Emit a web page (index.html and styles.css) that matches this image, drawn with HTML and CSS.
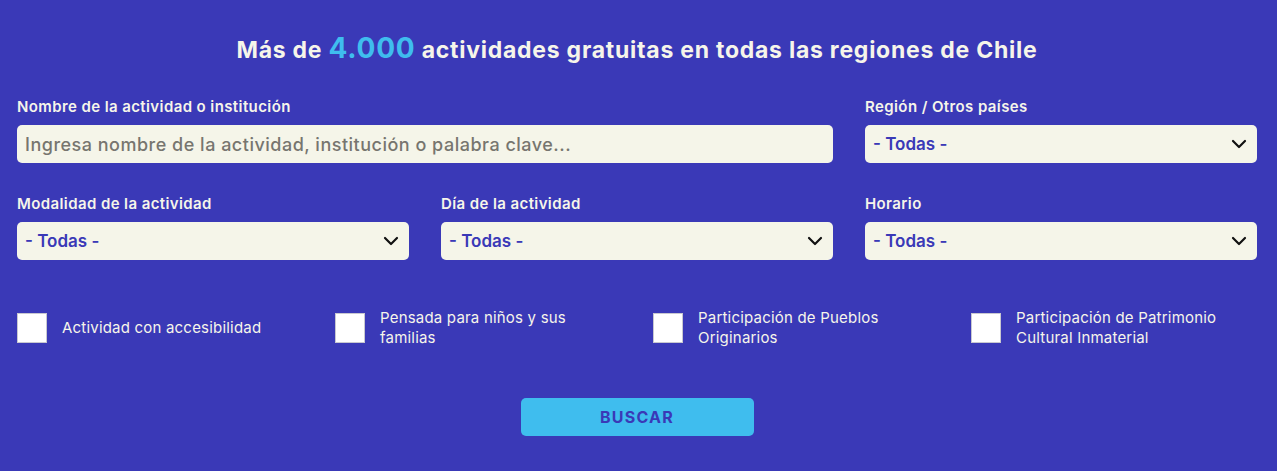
FILE: index.html
```html
<!DOCTYPE html>
<html lang="es">
<head>
<meta charset="utf-8">
<link rel="stylesheet" href="styles.css">
</head>
<body>
<div class="page">
  <h1 class="title">Más de <span class="num">4.000</span> actividades gratuitas en todas las regiones de Chile</h1>
  <div class="grid">
    <div class="field span2">
      <label class="lbl">Nombre de la actividad o institución</label>
      <div class="input placeholder">Ingresa nombre de la actividad, institución o palabra clave...</div>
    </div>
    <div class="field">
      <label class="lbl">Región / Otros países</label>
      <div class="input select"><span>- Todas -</span><svg class="chev" viewBox="0 0 16 10" width="16" height="10"><path d="M2 2l6 6 6-6" fill="none" stroke="#111" stroke-width="2.2" stroke-linecap="round" stroke-linejoin="round"/></svg></div>
    </div>
    <div class="field">
      <label class="lbl">Modalidad de la actividad</label>
      <div class="input select"><span>- Todas -</span><svg class="chev" viewBox="0 0 16 10" width="16" height="10"><path d="M2 2l6 6 6-6" fill="none" stroke="#111" stroke-width="2.2" stroke-linecap="round" stroke-linejoin="round"/></svg></div>
    </div>
    <div class="field">
      <label class="lbl">Día de la actividad</label>
      <div class="input select"><span>- Todas -</span><svg class="chev" viewBox="0 0 16 10" width="16" height="10"><path d="M2 2l6 6 6-6" fill="none" stroke="#111" stroke-width="2.2" stroke-linecap="round" stroke-linejoin="round"/></svg></div>
    </div>
    <div class="field">
      <label class="lbl">Horario</label>
      <div class="input select"><span>- Todas -</span><svg class="chev" viewBox="0 0 16 10" width="16" height="10"><path d="M2 2l6 6 6-6" fill="none" stroke="#111" stroke-width="2.2" stroke-linecap="round" stroke-linejoin="round"/></svg></div>
    </div>
  </div>
  <div class="checks">
    <div class="check"><span class="box"></span><span class="ctext">Actividad con accesibilidad</span></div>
    <div class="check"><span class="box"></span><span class="ctext">Pensada para niños y sus<br>familias</span></div>
    <div class="check"><span class="box"></span><span class="ctext">Participación de Pueblos<br>Originarios</span></div>
    <div class="check"><span class="box"></span><span class="ctext">Participación de Patrimonio<br>Cultural Inmaterial</span></div>
  </div>
  <div class="actions">
    <button class="btn">BUSCAR</button>
  </div>
</div>
</body>
</html>
```

FILE: styles.css
```css
* { box-sizing: border-box; }
html, body { margin: 0; padding: 0; }
body {
  background: #3a39b7;
  font-family: "Inter", "Noto Sans", sans-serif;
  color: #fff;
  width: 1277px;
  height: 471px;
  overflow: hidden;
}
.page {
  width: 1240px;
  margin-left: 17px;
  padding-top: 32px;
}
.title {
  margin: 0;
  text-align: center;
  font-size: 23px;
  font-weight: 700;
  line-height: 32px;
  letter-spacing: 0.75px;
  color: #f6f5ea;
}
.title .num {
  color: #3fbdee;
  font-size: 28px;
}
.grid {
  display: grid;
  grid-template-columns: repeat(3, 392px);
  column-gap: 32px;
  row-gap: 32px;
  margin-top: 32px;
}
.span2 { grid-column: span 2; }
.field { display: flex; flex-direction: column; }
.lbl {
  font-size: 15px;
  font-weight: 600;
  line-height: 18px;
  height: 18px;
  margin-bottom: 9px;
  letter-spacing: 0.4px;
  color: #f6f5ea;
}
.input {
  height: 38px;
  background: #f5f5e9;
  border-radius: 5px;
  display: flex;
  align-items: center;
  padding: 0 8px;
  font-size: 17px;
}
.placeholder {
  color: #77756f;
  font-weight: 500;
  font-size: 18px;
  letter-spacing: 0.5px;
}
.select {
  justify-content: space-between;
  color: #3a39b7;
  font-weight: 600;
  padding-right: 10px;
}
.chev { display: block; }
.checks {
  display: grid;
  grid-template-columns: repeat(4, 318px);
  margin-top: 48px;
}
.check {
  display: flex;
  align-items: center;
}
.box {
  width: 30px;
  height: 30px;
  background: #fff;
  border: 1px solid #c8c8d0;
  flex: none;
  margin-right: 15px;
}
.ctext {
  font-size: 15px;
  line-height: 20px;
  letter-spacing: 0.2px;
  color: #f6f5ea;
}
.actions {
  display: flex;
  justify-content: center;
  margin-top: 50px;
}
.btn {
  width: 233px;
  height: 38px;
  background: #3fbdee;
  border: none;
  border-radius: 5px;
  color: #3a39b7;
  font-family: "Inter", sans-serif;
  font-size: 16px;
  font-weight: 700;
  letter-spacing: 1.2px;
}
```
